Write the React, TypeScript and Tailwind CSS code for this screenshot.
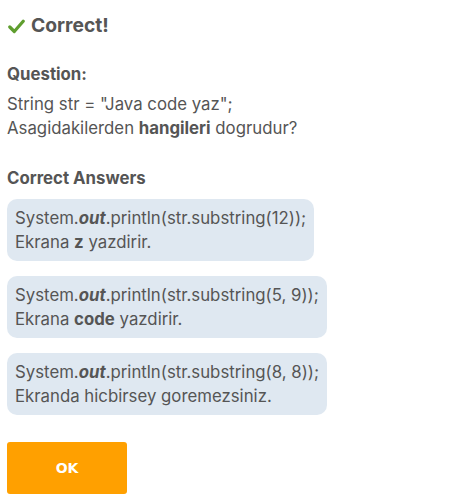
const answers = [
  { code: 'substring(12)', pre: 'Ekrana ', bold: 'z', post: ' yazdirir.' },
  { code: 'substring(5, 9)', pre: 'Ekrana ', bold: 'code', post: ' yazdirir.' },
  { code: 'substring(8, 8)', pre: 'Ekranda hicbirsey goremezsiniz.', bold: '', post: '' },
]

export default function App() {
  return (
    <div className="min-h-[501px] bg-white px-[7px] pt-[12px] text-[#555555] font-['Inter',sans-serif]">
      {/* Header */}
      <div className="flex items-center gap-[6px]">
        <svg width="17" height="15" viewBox="0 0 17 15" className="ml-[1px] mt-[1px]">
          <path d="M1.8 8 L6.3 12.5 L15.2 2.2" fill="none" stroke="#5f9e2f" strokeWidth="3.2" strokeLinecap="round" strokeLinejoin="round" />
        </svg>
        <span className="text-[19.3px] font-bold leading-[27px]">Correct!</span>
      </div>

      {/* Question */}
      <div className="mt-[24px] text-[16.8px] font-bold leading-[22px]">Question:</div>
      <div className="mt-[7px] text-[16.8px] leading-[24px]">
        String str = "Java code yaz";
        <br />
        Asagidakilerden <b>hangileri</b> dogrudur?
      </div>

      {/* Answers */}
      <div className="mt-[27px] text-[16.8px] font-bold leading-[22px]">Correct Answers</div>
      <div className="mt-[10px] flex flex-col items-start gap-[15px]">
        {answers.map((a) => (
          <div key={a.code} className="rounded-[10px] bg-[#dfe8f1] px-[8px] py-[7px] text-[16.8px] leading-[24px]">
            System.<b><i>out</i></b>.println(str.{a.code});
            <br />
            {a.pre}
            {a.bold && <b>{a.bold}</b>}
            {a.post}
          </div>
        ))}
      </div>

      <button className="mt-[27px] h-[52px] w-[120px] rounded-[3px] bg-[#ffa000] text-[14px] font-bold text-white font-['DejaVu_Sans',sans-serif]">
        OK
      </button>
    </div>
  )
}
